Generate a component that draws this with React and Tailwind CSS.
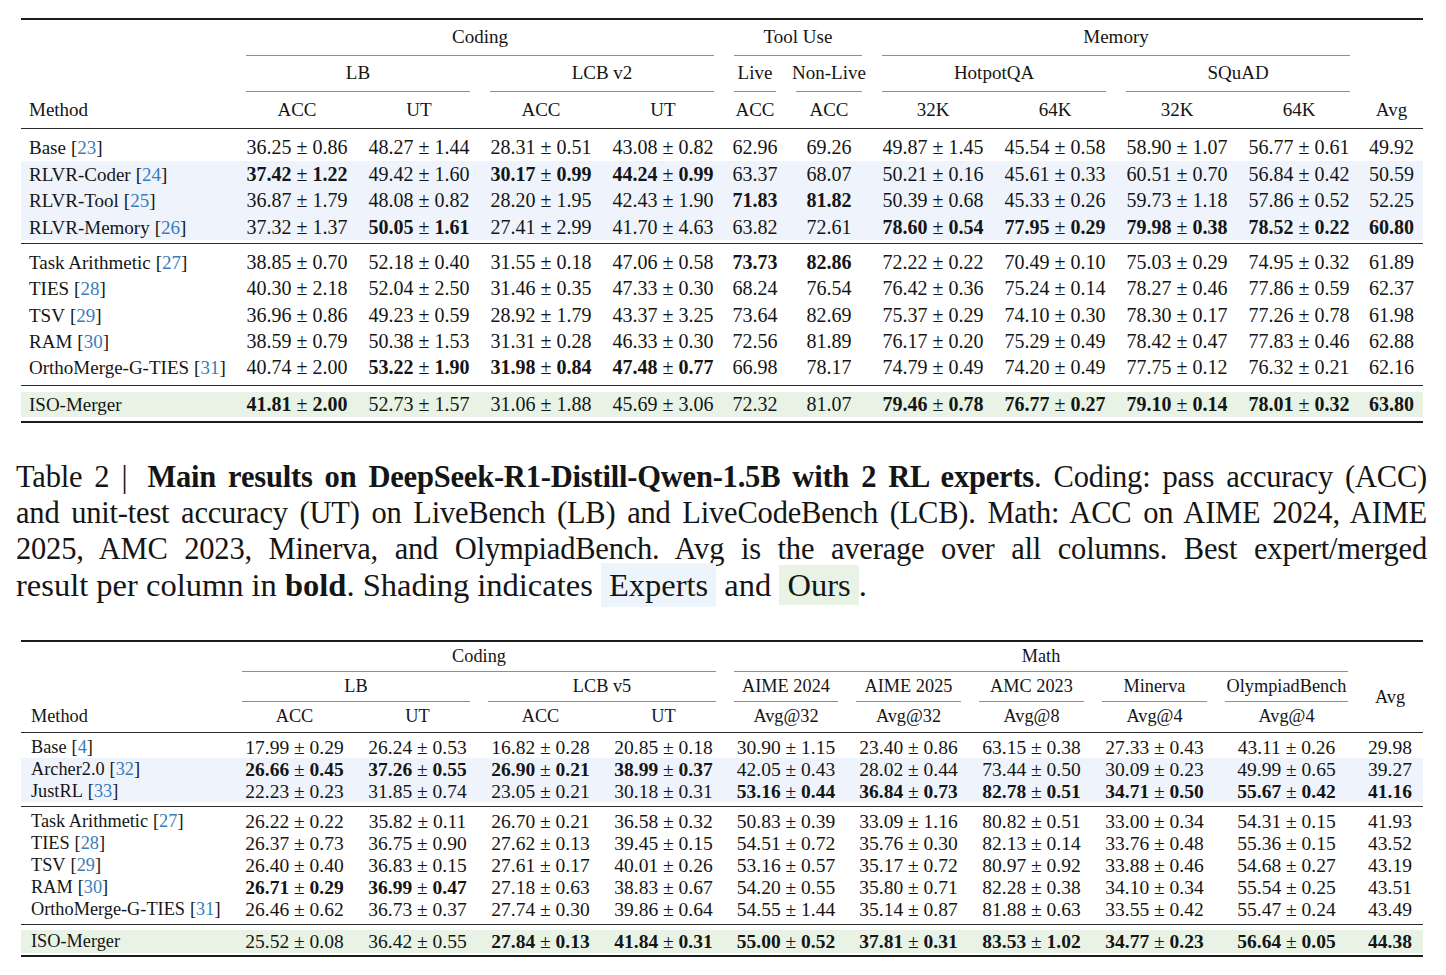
import React from "react";

const G1 = "grid grid-cols-[215px_122px_122px_122px_122px_62px_86px_122px_122px_122px_122px_63px]";
const G2 = "grid grid-cols-[212px_123px_123px_123px_123px_122px_123px_123px_123px_141px_66px]";

const t1 = [
  ["Base", "23", ["36.25 ± 0.86", "48.27 ± 1.44", "28.31 ± 0.51", "43.08 ± 0.82", "62.96", "69.26", "49.87 ± 1.45", "45.54 ± 0.58", "58.90 ± 1.07", "56.77 ± 0.61", "49.92"]],
  ["RLVR-Coder", "24", ["*37.42 ± 1.22", "49.42 ± 1.60", "*30.17 ± 0.99", "*44.24 ± 0.99", "63.37", "68.07", "50.21 ± 0.16", "45.61 ± 0.33", "60.51 ± 0.70", "56.84 ± 0.42", "50.59"]],
  ["RLVR-Tool", "25", ["36.87 ± 1.79", "48.08 ± 0.82", "28.20 ± 1.95", "42.43 ± 1.90", "*71.83", "*81.82", "50.39 ± 0.68", "45.33 ± 0.26", "59.73 ± 1.18", "57.86 ± 0.52", "52.25"]],
  ["RLVR-Memory", "26", ["37.32 ± 1.37", "*50.05 ± 1.61", "27.41 ± 2.99", "41.70 ± 4.63", "63.82", "72.61", "*78.60 ± 0.54", "*77.95 ± 0.29", "*79.98 ± 0.38", "*78.52 ± 0.22", "*60.80"]],
  ["Task Arithmetic", "27", ["38.85 ± 0.70", "52.18 ± 0.40", "31.55 ± 0.18", "47.06 ± 0.58", "*73.73", "*82.86", "72.22 ± 0.22", "70.49 ± 0.10", "75.03 ± 0.29", "74.95 ± 0.32", "61.89"]],
  ["TIES", "28", ["40.30 ± 2.18", "52.04 ± 2.50", "31.46 ± 0.35", "47.33 ± 0.30", "68.24", "76.54", "76.42 ± 0.36", "75.24 ± 0.14", "78.27 ± 0.46", "77.86 ± 0.59", "62.37"]],
  ["TSV", "29", ["36.96 ± 0.86", "49.23 ± 0.59", "28.92 ± 1.79", "43.37 ± 3.25", "73.64", "82.69", "75.37 ± 0.29", "74.10 ± 0.30", "78.30 ± 0.17", "77.26 ± 0.78", "61.98"]],
  ["RAM", "30", ["38.59 ± 0.79", "50.38 ± 1.53", "31.31 ± 0.28", "46.33 ± 0.30", "72.56", "81.89", "76.17 ± 0.20", "75.29 ± 0.49", "78.42 ± 0.47", "77.83 ± 0.46", "62.88"]],
  ["OrthoMerge-G-TIES", "31", ["40.74 ± 2.00", "*53.22 ± 1.90", "*31.98 ± 0.84", "*47.48 ± 0.77", "66.98", "78.17", "74.79 ± 0.49", "74.20 ± 0.49", "77.75 ± 0.12", "76.32 ± 0.21", "62.16"]],
  ["ISO-Merger", null, ["*41.81 ± 2.00", "52.73 ± 1.57", "31.06 ± 1.88", "45.69 ± 3.06", "72.32", "81.07", "*79.46 ± 0.78", "*76.77 ± 0.27", "*79.10 ± 0.14", "*78.01 ± 0.32", "*63.80"]],
];

const t2 = [
  ["Base", "4", ["17.99 ± 0.29", "26.24 ± 0.53", "16.82 ± 0.28", "20.85 ± 0.18", "30.90 ± 1.15", "23.40 ± 0.86", "63.15 ± 0.38", "27.33 ± 0.43", "43.11 ± 0.26", "29.98"]],
  ["Archer2.0", "32", ["*26.66 ± 0.45", "*37.26 ± 0.55", "*26.90 ± 0.21", "*38.99 ± 0.37", "42.05 ± 0.43", "28.02 ± 0.44", "73.44 ± 0.50", "30.09 ± 0.23", "49.99 ± 0.65", "39.27"]],
  ["JustRL", "33", ["22.23 ± 0.23", "31.85 ± 0.74", "23.05 ± 0.21", "30.18 ± 0.31", "*53.16 ± 0.44", "*36.84 ± 0.73", "*82.78 ± 0.51", "*34.71 ± 0.50", "*55.67 ± 0.42", "*41.16"]],
  ["Task Arithmetic", "27", ["26.22 ± 0.22", "35.82 ± 0.11", "26.70 ± 0.21", "36.58 ± 0.32", "50.83 ± 0.39", "33.09 ± 1.16", "80.82 ± 0.51", "33.00 ± 0.34", "54.31 ± 0.15", "41.93"]],
  ["TIES", "28", ["26.37 ± 0.73", "36.75 ± 0.90", "27.62 ± 0.13", "39.45 ± 0.15", "54.51 ± 0.72", "35.76 ± 0.30", "82.13 ± 0.14", "33.76 ± 0.48", "55.36 ± 0.15", "43.52"]],
  ["TSV", "29", ["26.40 ± 0.40", "36.83 ± 0.15", "27.61 ± 0.17", "40.01 ± 0.26", "53.16 ± 0.57", "35.17 ± 0.72", "80.97 ± 0.92", "33.88 ± 0.46", "54.68 ± 0.27", "43.19"]],
  ["RAM", "30", ["*26.71 ± 0.29", "*36.99 ± 0.47", "27.18 ± 0.63", "38.83 ± 0.67", "54.20 ± 0.55", "35.80 ± 0.71", "82.28 ± 0.38", "34.10 ± 0.34", "55.54 ± 0.25", "43.51"]],
  ["OrthoMerge-G-TIES", "31", ["26.46 ± 0.62", "36.73 ± 0.37", "27.74 ± 0.30", "39.86 ± 0.64", "54.55 ± 1.44", "35.14 ± 0.87", "81.88 ± 0.63", "33.55 ± 0.42", "55.47 ± 0.24", "43.49"]],
  ["ISO-Merger", null, ["25.52 ± 0.08", "36.42 ± 0.55", "*27.84 ± 0.13", "*41.84 ± 0.31", "*55.00 ± 0.52", "*37.81 ± 0.31", "*83.53 ± 1.02", "*34.77 ± 0.23", "*56.64 ± 0.05", "*44.38"]],
];

function Val({ v }) {
  const bold = v.startsWith("*");
  const s = bold ? v.slice(1) : v;
  const parts = s.split(" ± ");
  const B = ({ children }) => (bold ? <span className="font-bold">{children}</span> : <span>{children}</span>);
  if (parts.length === 1) return <B>{parts[0]}</B>;
  return (
    <span>
      <B>{parts[0]}</B> ± <B>{parts[1]}</B>
    </span>
  );
}

function DataRow({ grid, row, h, bg, pl, nameSize, numSize }) {
  const [name, cite, vals] = row;
  return (
    <div className={`${grid} ${h} ${bg}`}>
      <div className={`flex items-center whitespace-nowrap leading-[17px] ${pl} ${nameSize}`}>
        {name}
        {cite && (
          <span className="ml-[5px]">
            [<span className="text-[#3a7cbd]">{cite}</span>]
          </span>
        )}
      </div>
      {vals.map((v, i) => (
        <div key={i} className={`flex items-center justify-center whitespace-nowrap leading-[17px] ${numSize}`}>
          <Val v={v} />
        </div>
      ))}
    </div>
  );
}

function Group({ span, label, trim }) {
  return (
    <div className={`${span} flex flex-col`}>
      <div className="flex-1 flex items-center justify-center whitespace-nowrap">{label}</div>
      <div className={`h-px bg-[#8f8f8f] ${trim}`} />
    </div>
  );
}

function C({ children, extra = "" }) {
  return <div className={`flex items-center justify-center whitespace-nowrap ${extra}`}>{children}</div>;
}

function Table1() {
  const h1 = ["h-[28px]", "h-[26px]", "h-[27px]", "h-[26px]"];
  const h2 = ["h-[26px]", "h-[27px]", "h-[26px]", "h-[26px]", "h-[27px]"];
  const ns = "text-[19px]";
  const vs = "text-[20px]";
  return (
    <div className="ml-[21px] w-[1402px] pt-[18px] text-[19px] text-[#151515]">
      <div className="h-[2px] bg-[#1c1c1c]" />
      <div className={`${G1} grid-rows-[36px_36px_36px]`}>
        <div />
        <Group span="col-span-4" label="Coding" trim="mx-[10px]" />
        <Group span="col-span-2" label="Tool Use" trim="mx-[10px]" />
        <Group span="col-span-4" label="Memory" trim="mx-[10px]" />
        <div />
        <div />
        <Group span="col-span-2" label="LB" trim="mx-[10px]" />
        <Group span="col-span-2" label="LCB v2" trim="mx-[10px]" />
        <Group span="col-span-1" label="Live" trim="mx-[10px]" />
        <Group span="col-span-1" label="Non-Live" trim="mx-[10px]" />
        <Group span="col-span-2" label="HotpotQA" trim="mx-[10px]" />
        <Group span="col-span-2" label="SQuAD" trim="mx-[10px]" />
        <div />
        <div className="flex items-center pl-[8px]">Method</div>
        <C>ACC</C>
        <C>UT</C>
        <C>ACC</C>
        <C>UT</C>
        <C>ACC</C>
        <C>ACC</C>
        <C>32K</C>
        <C>64K</C>
        <C>32K</C>
        <C>64K</C>
        <C>Avg</C>
      </div>
      <div className="h-px bg-[#2a2a2a]" />
      <div className="h-[4px]" />
      {t1.slice(0, 4).map((r, i) => (
        <DataRow key={i} grid={G1} row={r} h={h1[i]} bg={i > 0 ? "bg-[#eff4fc]" : ""} pl="pl-[8px]" nameSize={ns} numSize={vs} />
      ))}
      <div className="h-[3px]" />
      <div className="h-px bg-[#2a2a2a]" />
      <div className="h-[5px]" />
      {t1.slice(4, 9).map((r, i) => (
        <DataRow key={i} grid={G1} row={r} h={h2[i]} bg="" pl="pl-[8px]" nameSize={ns} numSize={vs} />
      ))}
      <div className="h-[4px]" />
      <div className="h-px bg-[#2a2a2a]" />
      <div className="h-[6px]" />
      <DataRow grid={G1} row={t1[9]} h="h-[25px]" bg="bg-[#e8f3e6]" pl="pl-[8px]" nameSize={ns} numSize={vs} />
      <div className="h-[4px]" />
      <div className="h-[2px] bg-[#1c1c1c]" />
    </div>
  );
}

function Table2() {
  const ns = "text-[18.3px]";
  const vs = "text-[19.5px]";
  return (
    <div className="ml-[21px] w-[1402px] mt-[37px] text-[18.3px] text-[#151515]">
      <div className="h-[2px] bg-[#1c1c1c]" />
      <div className={`${G2} grid-rows-[30px_30px_30px]`}>
        <div />
        <Group span="col-span-4" label="Coding" trim="mx-[9px]" />
        <Group span="col-span-5" label="Math" trim="mx-[9px]" />
        <div />
        <div />
        <Group span="col-span-2" label="LB" trim="mx-[9px]" />
        <Group span="col-span-2" label="LCB v5" trim="mx-[9px]" />
        <Group span="col-span-1" label="AIME 2024" trim="mx-[9px]" />
        <Group span="col-span-1" label="AIME 2025" trim="mx-[9px]" />
        <Group span="col-span-1" label="AMC 2023" trim="mx-[9px]" />
        <Group span="col-span-1" label="Minerva" trim="mx-[9px]" />
        <Group span="col-span-1" label="OlympiadBench" trim="mx-[9px]" />
        <C extra="row-span-2 pb-[8px]">Avg</C>
        <div className="flex items-center pl-[10px]">Method</div>
        <C>ACC</C>
        <C>UT</C>
        <C>ACC</C>
        <C>UT</C>
        <C>Avg@32</C>
        <C>Avg@32</C>
        <C>Avg@8</C>
        <C>Avg@4</C>
        <C>Avg@4</C>
      </div>
      <div className="h-px bg-[#2a2a2a]" />
      <div className="h-[3px]" />
      {t2.slice(0, 3).map((r, i) => (
        <DataRow key={i} grid={G2} row={r} h="h-[22px]" bg={i > 0 ? "bg-[#eff4fc]" : ""} pl="pl-[10px]" nameSize={ns} numSize={vs} />
      ))}
      <div className="h-[4px]" />
      <div className="h-px bg-[#2a2a2a]" />
      <div className="h-[3px]" />
      {t2.slice(3, 8).map((r, i) => (
        <DataRow key={i} grid={G2} row={r} h="h-[22px]" bg="" pl="pl-[10px]" nameSize={ns} numSize={vs} />
      ))}
      <div className="h-[4px]" />
      <div className="h-px bg-[#2a2a2a]" />
      <div className="h-[5px]" />
      <DataRow grid={G2} row={t2[8]} h="h-[23px]" bg="bg-[#e8f3e6]" pl="pl-[10px]" nameSize={ns} numSize={vs} />
      <div className="h-[2px]" />
      <div className="h-[2px] bg-[#1c1c1c]" />
    </div>
  );
}

function Caption() {
  const just = "text-justify [text-align-last:justify]";
  return (
    <div className="ml-[16px] w-[1411px] mt-[36px] text-[30.5px] leading-[36px] tracking-[-0.2px] text-[#151515]">
      <div className={just}>
        Table 2 |<span className="inline-block w-[8px]" /> <span className="font-bold">Main results on DeepSeek-R1-Distill-Qwen-1.5B with 2 RL experts</span>. Coding: pass accuracy (ACC)
      </div>
      <div className={just}>
        and unit-test accuracy (UT) on LiveBench (LB) and LiveCodeBench (LCB). Math: ACC on AIME 2024, AIME
      </div>
      <div className={just}>
        2025, AMC 2023, Minerva, and OlympiadBench. Avg is the average over all columns. Best expert/merged
      </div>
      <div className="whitespace-nowrap tracking-normal text-[32.5px]">
        result per column in <span className="font-bold">bold</span>. Shading indicates{" "}
        <span className="bg-[#eef4fc] px-[8px] py-[4px]">Experts</span> and{" "}
        <span className="bg-[#e8f3e6] px-[8px] py-[2px]">Ours</span>.
      </div>
    </div>
  );
}

export default function App() {
  return (
    <div className="w-[1446px] h-[975px] bg-white font-['Liberation_Serif',serif] overflow-hidden">
      <Table1 />
      <Caption />
      <Table2 />
    </div>
  );
}
